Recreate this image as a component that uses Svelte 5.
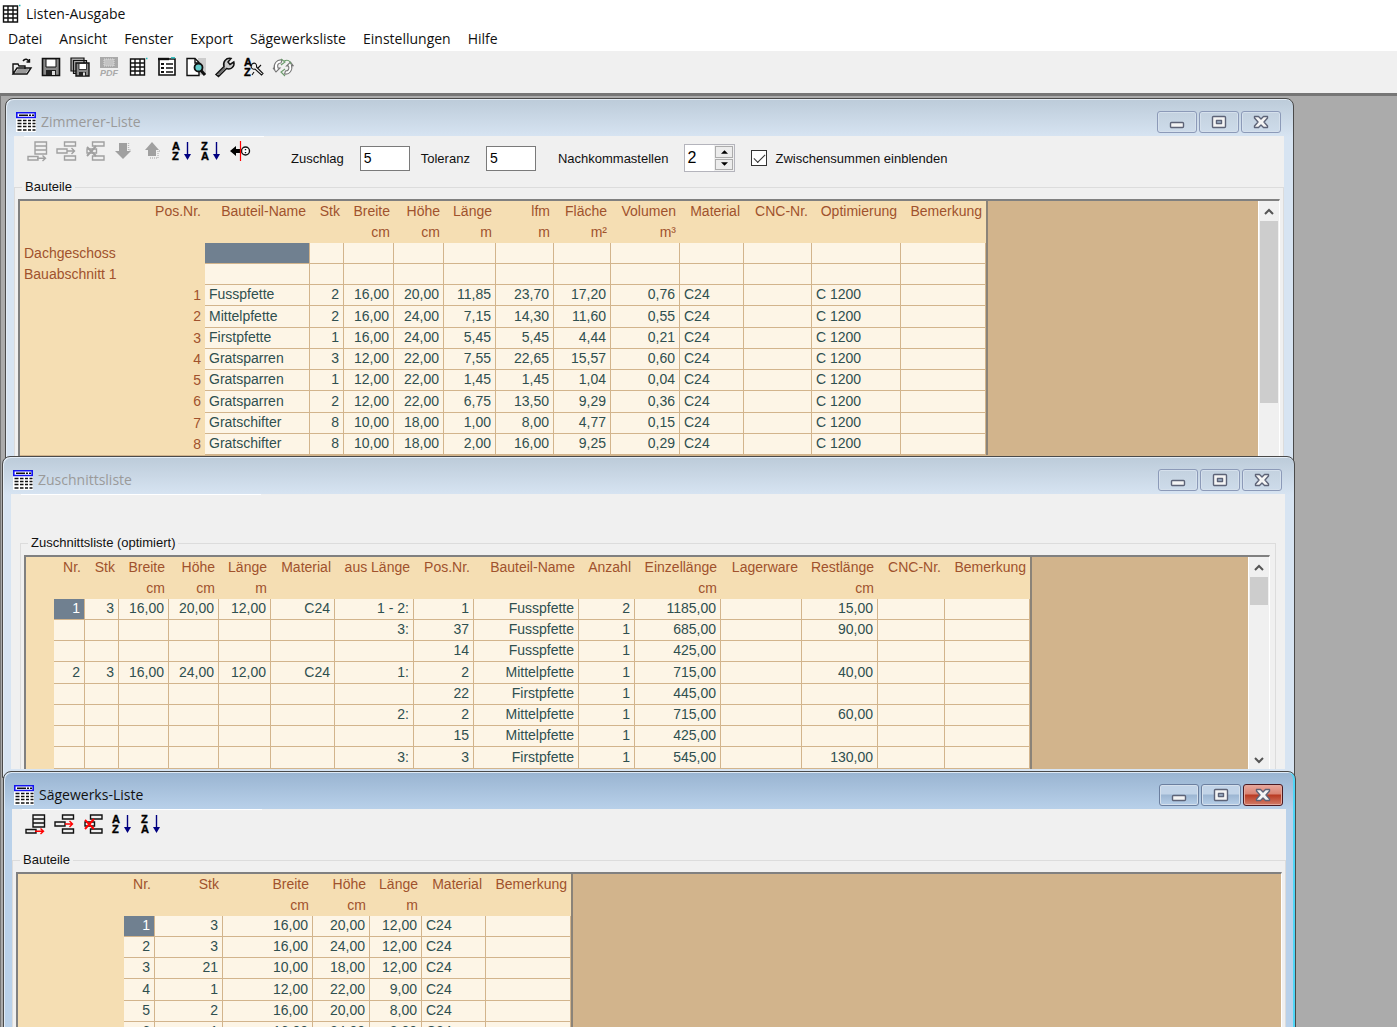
<script lang="ts">
  type Column = { title: string; unit?: string; width: number; left?: boolean };

  const menu = ["Datei", "Ansicht", "Fenster", "Export", "Sägewerksliste", "Einstellungen", "Hilfe"];

  const mainTools = ["open", "save", "saveall", "pdf", "grid", "form", "preview", "wrench", "azwrench", "refresh"];

  let zuschlag = $state("5");
  let toleranz = $state("5");
  let stellen = $state(2);
  let zwischensummen = $state(true);

  const zimmererColumns: Column[] = [
    { title: "Bauteil-Name", width: 105, left: true },
    { title: "Stk", width: 34 },
    { title: "Breite", unit: "cm", width: 50 },
    { title: "Höhe", unit: "cm", width: 50 },
    { title: "Länge", unit: "m", width: 52 },
    { title: "lfm", unit: "m", width: 58 },
    { title: "Fläche", unit: "m²", width: 57 },
    { title: "Volumen", unit: "m³", width: 69 },
    { title: "Material", width: 64, left: true },
    { title: "CNC-Nr.", width: 68 },
    { title: "Optimierung", width: 89, left: true },
    { title: "Bemerkung", width: 85, left: true },
  ];

  const zimmererRows = [
    ["1", "Fusspfette", "2", "16,00", "20,00", "11,85", "23,70", "17,20", "0,76", "C24", "", "C 1200", ""],
    ["2", "Mittelpfette", "2", "16,00", "24,00", "7,15", "14,30", "11,60", "0,55", "C24", "", "C 1200", ""],
    ["3", "Firstpfette", "1", "16,00", "24,00", "5,45", "5,45", "4,44", "0,21", "C24", "", "C 1200", ""],
    ["4", "Gratsparren", "3", "12,00", "22,00", "7,55", "22,65", "15,57", "0,60", "C24", "", "C 1200", ""],
    ["5", "Gratsparren", "1", "12,00", "22,00", "1,45", "1,45", "1,04", "0,04", "C24", "", "C 1200", ""],
    ["6", "Gratsparren", "2", "12,00", "22,00", "6,75", "13,50", "9,29", "0,36", "C24", "", "C 1200", ""],
    ["7", "Gratschifter", "8", "10,00", "18,00", "1,00", "8,00", "4,77", "0,15", "C24", "", "C 1200", ""],
    ["8", "Gratschifter", "8", "10,00", "18,00", "2,00", "16,00", "9,25", "0,29", "C24", "", "C 1200", ""],
  ];

  const zuschnittColumns: Column[] = [
    { title: "Nr.", width: 31 },
    { title: "Stk", width: 34 },
    { title: "Breite", unit: "cm", width: 50 },
    { title: "Höhe", unit: "cm", width: 50 },
    { title: "Länge", unit: "m", width: 52 },
    { title: "Material", width: 64 },
    { title: "aus Länge", width: 79 },
    { title: "Pos.Nr.", width: 60 },
    { title: "Bauteil-Name", width: 105 },
    { title: "Anzahl", width: 56 },
    { title: "Einzellänge", unit: "cm", width: 86 },
    { title: "Lagerware", width: 81 },
    { title: "Restlänge", unit: "cm", width: 76 },
    { title: "CNC-Nr.", width: 67 },
    { title: "Bemerkung", width: 85 },
  ];

  const zuschnittRows = [
    ["1", "3", "16,00", "20,00", "12,00", "C24", "1 - 2:", "1", "Fusspfette", "2", "1185,00", "", "15,00", "", ""],
    ["", "", "", "", "", "", "3:", "37", "Fusspfette", "1", "685,00", "", "90,00", "", ""],
    ["", "", "", "", "", "", "", "14", "Fusspfette", "1", "425,00", "", "", "", ""],
    ["2", "3", "16,00", "24,00", "12,00", "C24", "1:", "2", "Mittelpfette", "1", "715,00", "", "40,00", "", ""],
    ["", "", "", "", "", "", "", "22", "Firstpfette", "1", "445,00", "", "", "", ""],
    ["", "", "", "", "", "", "2:", "2", "Mittelpfette", "1", "715,00", "", "60,00", "", ""],
    ["", "", "", "", "", "", "", "15", "Mittelpfette", "1", "425,00", "", "", "", ""],
    ["", "", "", "", "", "", "3:", "3", "Firstpfette", "1", "545,00", "", "130,00", "", ""],
  ];

  const saegewerkColumns: Column[] = [
    { title: "Nr.", width: 31 },
    { title: "Stk", width: 68 },
    { title: "Breite", unit: "cm", width: 90 },
    { title: "Höhe", unit: "cm", width: 57 },
    { title: "Länge", unit: "m", width: 52 },
    { title: "Material", width: 64, left: true },
    { title: "Bemerkung", width: 85, left: true },
  ];

  const saegewerkRows = [
    ["1", "3", "16,00", "20,00", "12,00", "C24", ""],
    ["2", "3", "16,00", "24,00", "12,00", "C24", ""],
    ["3", "21", "10,00", "18,00", "12,00", "C24", ""],
    ["4", "1", "12,00", "22,00", "9,00", "C24", ""],
    ["5", "2", "16,00", "20,00", "8,00", "C24", ""],
    ["6", "1", "16,00", "24,00", "8,00", "C24", ""],
  ];
</script>

{#snippet icon(name: string)}
  <svg class="icon" viewBox="0 0 20 20" fill="none" stroke="#111" stroke-width="1.4" aria-hidden="true">
    {#if name === "open"}
      <path d="M1 17V7h5l1 2h6v3M1 17l4-6h14l-4 6z" />
      <path d="M3 16l3-4h11l-3 4z" fill="#999" stroke="none" />
      <path d="M11 4c2-3 5-2 6 1M14.500 5h3V2" />
    {:else if name === "save"}
      <path d="M1.500 1.500h17v17h-17z" fill="#888" stroke-width="1.600" />
      <path d="M5 2h10v8H5z" fill="#fff" stroke-width="1" />
      <path d="M5 13h10v5H5z" fill="#222" stroke="none" />
      <path d="M11 14h3v4h-3z" fill="#ddd" stroke="none" />
    {:else if name === "saveall"}
      <path d="M1 1h13v13H1zM3.500 3.500h13v13h-13z" fill="#aaa" stroke-width="1.200" />
      <path d="M6 6h13v13H6z" fill="#888" stroke-width="1.400" />
      <path d="M9 6.500h7.500v6H9z" fill="#fff" stroke-width=".8" />
      <path d="M9 15h7v4H9z" fill="#222" stroke="none" />
      <path d="M13 15.500h2v3h-2z" fill="#ddd" stroke="none" />
    {:else if name === "pdf"}
      <path d="M1 0h18v11H1z" fill="#a9a9a9" stroke="none" />
      <path d="M5 2h10v7H5z" fill="#c4c4c4" stroke="#ddd" stroke-width="1" stroke-dasharray="1 1" />
      <text x="1" y="19" class="pdf">PDF</text>
    {:else if name === "grid"}
      <path d="M2.500 2h14v16h-14z" fill="#fff" />
      <path d="M2.500 6h14M2.500 10h14M2.500 14h14M7 2v16M12 2v16" />
      <path d="M18 1.500h1.500" stroke="#2bb" />
    {:else if name === "form"}
      <path d="M2 2h16v16H2z" fill="#fff" stroke-width="1.600" />
      <path d="M1 2h11" stroke-width="2.400" />
      <path d="M4 6h3v2H4zM4 10h3v2H4zM4 14h3v2H4z" fill="#111" stroke="none" />
      <path d="M9 7h7M9 11h7M9 15h7" />
      <path d="M14 .8h4" stroke="#2bb" />
    {:else if name === "preview"}
      <path d="M12 1h8v17h-8z" fill="#ccc" stroke="none" />
      <path d="M1 1.500h8l4 4v13H1z" fill="#fff" />
      <path d="M9 2v4h4" />
      <circle cx="12.500" cy="10.500" r="4" fill="#6cc" stroke-width="1.800" />
      <path d="M15 13.500l4 4.500" stroke-width="3" />
    {:else if name === "wrench"}
      <path d="M1 17.500l8-8C7.500 5 11 .5 16 1.500L13 5l2 2.500L18.800 5C20 9.500 16 13 11.500 11.500L3.500 19.500z" fill="#ccc" stroke-width="1.500" />
      <path d="M3 17.500l7-7" stroke="#666" />
    {:else if name === "azwrench"}
      <text x="0" y="9" class="az">A</text>
      <text x="0" y="19" class="az">Z</text>
      <path d="M8 7c3-2 5 0 4.500 3l6.500 6.500-1.500 1.500-6.500-6c-3 1-5-2-3-5M17 8l-3 3M10 15l-2 3" stroke-width="1.100" />
    {:else if name === "refresh"}
      <g stroke-width="1.100" stroke="#777">
        <path d="M1.500 12C0 7 4 2 9 3l-1 3c-3 0-4 2-3 5h2l-4 4-3-4z" fill="#fff" />
        <path d="M18.500 8c1.500 5-2 10-7 9l1-3c3 0 4-2 3-5h-2l4-4 3 4z" fill="#fff" />
        <path d="M8 2l4 3-4 3M12 12l-4 3 4 4M11 4c4-2 6 0 7 3" stroke="#6a9a6a" />
      </g>
    {:else if name === "append" || name === "append-off"}
      {@const off = name === "append-off"}
      <path d="M8 1h11.500v12H8zM8 5h11.500M8 9h11.500M1 15.500h10V19H1z" stroke={off ? "#a0a0a0" : "#111"} />
      <path d="M10 17.200h8M15.500 14.500l3 2.700-3 2.800" stroke={off ? "#a0a0a0" : "#f00"} />
    {:else if name === "insert" || name === "insert-off"}
      {@const off = name === "insert-off"}
      <path d="M8.500 1h11v4h-11zM1 8h10v4H1zM8.500 15h11v4h-11z" stroke={off ? "#a0a0a0" : "#111"} />
      <path d="M11 10h7.500M15.500 7l3 3-3 3" stroke={off ? "#a0a0a0" : "#f00"} />
    {:else if name === "delete" || name === "delete-off"}
      {@const off = name === "delete-off"}
      <path d="M7.500 1h11.500v4H7.500zM2 8h9.500v4H2zM7.500 15h11.500v4H7.500z" stroke={off ? "#a0a0a0" : "#111"} />
      <path d="M2 6l9 9M11 5l-9 10" stroke={off ? "#a0a0a0" : "#f00"} stroke-width="1.900" />
    {:else if name === "down"}
      <path d="M5 2h8v8h4l-8 8-8-8h4z" fill="#a0a0a0" stroke="none" />
      <path d="M14.500 2v7h3" stroke="#bbb" stroke-dasharray="1 1" />
    {:else if name === "up"}
      <path d="M5 15h8V9h3L9 1 2 9h3z" fill="#a0a0a0" stroke="none" />
      <path d="M7 17h8v-7h3" stroke="#bbb" stroke-dasharray="1 1" />
    {:else if name === "az" || name === "za"}
      <text x="0" y="9" class="az">{name === "az" ? "A" : "Z"}</text>
      <text x="0" y="19" class="az">{name === "az" ? "Z" : "A"}</text>
      <path d="M15.500 1v13" stroke="#000080" />
      <path d="M12 13h7l-3.500 6z" fill="#000080" stroke="none" />
    {:else if name === "gauge"}
      <path d="M0 10l6-5v3h4v4H6v3z" fill="#000" stroke="none" />
      <circle cx="15.500" cy="10" r="4" fill="#fff" />
      <path d="M15.500 8v1.200M15.500 11v1.200" />
      <path d="M10.500 0v20" stroke="#f00" stroke-width="1.200" />
    {:else if name === "list"}
      <path d="M0 0h20v20H0z" fill="#fff" stroke="none" />
      <path d="M.8.800h18.400v4.700H.8z" fill="#fff" stroke="#1414f0" stroke-width="1.600" />
      <path d="M3 3.200h9M13 3.200h2M16 3.200h2" />
      <path d="M1.500 8.500h4M7 8.500h3.500M12 8.500h3M16.500 8.500h3M1.500 11.500h4M7 11.500h3.500M12 11.500h3M16.500 11.500h3M1.500 14.500h4M7 14.500h3.500M12 14.500h3M16.500 14.500h3M1.500 18h4M7 18h3.500M12 18h3M16.500 18h3" stroke-width="1.700" />
    {/if}
  </svg>
{/snippet}

{#snippet tool(name: string)}
  <button class="tool" type="button" aria-label={name}>{@render icon(name)}</button>
{/snippet}

{#snippet titleBar(title: string)}
  <header class="title-bar">
    {@render icon("list")}
    <h2>{title}</h2>
    <div class="window-buttons">
      <button type="button" aria-label="Minimieren">
        <svg viewBox="0 0 16 14"><rect x="1.500" y="7.500" width="13" height="5" rx="1" /></svg>
      </button>
      <button type="button" aria-label="Maximieren">
        <svg viewBox="0 0 16 14">
          <rect x="1.500" y="1.500" width="13" height="11" rx="1" />
          <rect x="5.500" y="5.500" width="5" height="3" class="hole" />
        </svg>
      </button>
      <button class="close" type="button" aria-label="Schließen">
        <svg viewBox="0 0 16 14">
          <path d="M1.500 1.500h4L8 4l2.500-2.500h4v1.500L11 7l3.500 4v1.500h-4L8 10l-2.500 2.500h-4V11L5 7 1.500 3z" />
        </svg>
      </button>
    </div>
  </header>
{/snippet}

{#snippet tableHead(columns: Column[], corner: string)}
  <thead>
    <tr>
      <th>{corner}</th>
      {#each columns as column}<th>{column.title}</th>{/each}
    </tr>
    <tr>
      <th></th>
      {#each columns as column}<th>{column.unit ?? ""}</th>{/each}
    </tr>
  </thead>
{/snippet}

{#snippet cols(columns: Column[], first: number)}
  <colgroup>
    <col style="width: {first}px" />
    {#each columns as column}<col style="width: {column.width}px" />{/each}
  </colgroup>
{/snippet}

{#snippet scrollbar(thumb: number)}
  <div class="scrollbar">
    <button type="button" aria-label="Nach oben"><svg viewBox="0 0 10 8"><path d="M1 6l4-4 4 4" /></svg></button>
    <div class="track"><div class="thumb" style="height: {thumb}px"></div></div>
    <button type="button" aria-label="Nach unten"><svg viewBox="0 0 10 8"><path d="M1 2l4 4 4-4" /></svg></button>
  </div>
{/snippet}

<div class="app">
  <header class="app-title">
    {@render icon("grid")}
    <h1>Listen-Ausgabe</h1>
  </header>
  <nav class="menu">
    {#each menu as item}<button type="button">{item}</button>{/each}
  </nav>
  <div class="main-tools">
    {#each mainTools as name}{@render tool(name)}{/each}
  </div>

  <main class="desktop">
    <section class="window zimmerer">
      {@render titleBar("Zimmerer-Liste")}
      <div class="client">
        <div class="bar">
          <div class="tools">
            {#each ["append-off", "insert-off", "delete-off", "down", "up", "az", "za", "gauge"] as name}{@render tool(name)}{/each}
          </div>
          <div class="options">
            <label for="zuschlag">Zuschlag</label>
            <input id="zuschlag" type="text" bind:value={zuschlag} />
            <label for="toleranz">Toleranz</label>
            <input id="toleranz" type="text" bind:value={toleranz} />
            <label for="stellen">Nachkommastellen</label>
            <div class="spinner">
              <input id="stellen" type="text" bind:value={stellen} />
              <div class="steps">
                <button type="button" aria-label="Mehr" onclick={() => stellen++}><svg viewBox="0 0 8 4"><path d="M4 0l4 4H0z" /></svg></button>
                <button type="button" aria-label="Weniger" onclick={() => stellen--}><svg viewBox="0 0 8 4"><path d="M0 0h8L4 4z" /></svg></button>
              </div>
            </div>
            <label class="check">
              <input type="checkbox" bind:checked={zwischensummen} />
              Zwischensummen einblenden
            </label>
          </div>
        </div>
        <fieldset>
          <legend>Bauteile</legend>
          <div class="panel">
            <table style="width: 968px">
              {@render cols(zimmererColumns, 185)}
              {@render tableHead(zimmererColumns, "Pos.Nr.")}
              <tbody>
                {#each ["Dachgeschoss", "Bauabschnitt 1"] as group, i}
                  <tr>
                    <th class="group">{group}</th>
                    {#each zimmererColumns as _, c}<td class:selected={i === 0 && c === 0}></td>{/each}
                  </tr>
                {/each}
                {#each zimmererRows as row}
                  <tr>
                    <th>{row[0]}</th>
                    {#each zimmererColumns as column, c}<td class:left={column.left}>{row[c + 1]}</td>{/each}
                  </tr>
                {/each}
              </tbody>
            </table>
            {@render scrollbar(182)}
          </div>
        </fieldset>
      </div>
    </section>

    <section class="window zuschnitt">
      {@render titleBar("Zuschnittsliste")}
      <div class="client">
        <div class="bar"></div>
        <fieldset>
          <legend>Zuschnittsliste (optimiert)</legend>
          <div class="panel">
            <table style="width: 1006px">
              {@render cols(zuschnittColumns, 28)}
              {@render tableHead(zuschnittColumns, "")}
              <tbody>
                {#each zuschnittRows as row, r}
                  <tr>
                    <th></th>
                    {#each row as cell, c}<td class:selected={r === 0 && c === 0}>{cell}</td>{/each}
                  </tr>
                {/each}
              </tbody>
            </table>
            {@render scrollbar(28)}
          </div>
        </fieldset>
      </div>
    </section>

    <section class="window saegewerk active">
      {@render titleBar("Sägewerks-Liste")}
      <div class="client">
        <div class="bar">
          <div class="tools">
            {#each ["append", "insert", "delete", "az", "za"] as name}{@render tool(name)}{/each}
          </div>
        </div>
        <fieldset>
          <legend>Bauteile</legend>
          <div class="panel">
            <table style="width: 555px">
              {@render cols(saegewerkColumns, 106)}
              {@render tableHead(saegewerkColumns, "")}
              <tbody>
                {#each saegewerkRows as row, r}
                  <tr>
                    <th></th>
                    {#each saegewerkColumns as column, c}
                      <td class:left={column.left} class:selected={r === 0 && c === 0}>{row[c]}</td>
                    {/each}
                  </tr>
                {/each}
              </tbody>
            </table>
          </div>
        </fieldset>
      </div>
    </section>
  </main>
</div>

<style>
  :global(body) {
    margin: 0;
  }
  .app {
    display: flex;
    flex-direction: column;
    height: 100vh;
    overflow: hidden;
    background: #fff;
    color: #111;
    font-family: "Liberation Sans", Arial, sans-serif;
    font-size: 13px;
  }
  .app * {
    box-sizing: border-box;
  }
  button {
    padding: 0;
    border: 0;
    background: none;
    font: inherit;
    color: inherit;
  }
  .icon {
    display: block;
    width: 20px;
    height: 20px;
    flex: none;
    overflow: visible;
  }
  .az {
    font: bold 11px "Liberation Sans", Arial, sans-serif;
    fill: #000;
    stroke: #000;
    stroke-width: 0.4;
  }
  .pdf {
    font: italic bold 9px "Liberation Sans", Arial, sans-serif;
    fill: #a9a9a9;
    stroke: none;
  }

  .app-title {
    display: flex;
    align-items: center;
    gap: 5px;
    height: 27px;
    padding-left: 1px;
  }
  h1,
  h2 {
    margin: 0;
    font-family: "Open Sans", "Segoe UI", sans-serif;
    font-size: 14px;
    font-weight: 400;
  }
  .menu {
    display: flex;
    gap: 17px;
    height: 24px;
    padding: 0 8px;
    font-family: "Open Sans", "Segoe UI", sans-serif;
    font-size: 14px;
    line-height: 24px;
  }
  .main-tools {
    display: flex;
    gap: 9px;
    height: 42px;
    padding: 6px 12px;
    background: #f0f0f0;
  }
  .tool {
    display: block;
    height: 20px;
  }

  .desktop {
    position: relative;
    flex: 1;
    min-height: 0;
    overflow: hidden;
    border-top: 3px solid #767676;
    border-left: 1px solid #767676;
    background: #ababab;
  }
  .window {
    position: absolute;
    display: flex;
    flex-direction: column;
    padding: 0 9px 8px 8px;
    border: 1px solid #4a4a4a;
    border-radius: 8px 8px 0 0;
    background: linear-gradient(#bccbd9, #d7e4f2 38px);
    box-shadow: inset 1px 1px 0 #e4edf6;
  }
  .zimmerer {
    top: 2px;
    left: 4px;
    right: 103px;
    height: 420px;
  }
  .zuschnitt {
    top: 360px;
    left: 1px;
    right: 102px;
  }
  .saegewerk {
    top: 675px;
    left: 2px;
    right: 101px;
    height: 300px;
  }
  .active {
    background: linear-gradient(#99b4d1, #b9d1ea 38px);
    box-shadow: inset 1px 1px 0 #dfeaf5, inset -2px 0 0 #4fd5f5;
  }
  .title-bar {
    display: flex;
    align-items: center;
    gap: 5px;
    height: 37px;
    padding: 8px 3px 0 2px;
    flex: none;
  }
  .title-bar h2 {
    flex: 1;
    color: #9a9a9a;
  }
  .active h2 {
    color: #111;
  }
  .window-buttons {
    display: flex;
    gap: 2px;
  }
  .window-buttons button {
    display: flex;
    align-items: center;
    justify-content: center;
    width: 40px;
    height: 22px;
    border: 1px solid #8c9ab8;
    border-radius: 3px;
    background: linear-gradient(#c3d1df, #cddbea);
    box-shadow: inset 0 0 0 1px #d5e0ec;
  }
  .window-buttons svg {
    width: 16px;
    height: 14px;
    fill: #f4f4f4;
    stroke: #5d6377;
    stroke-width: 1.4;
    stroke-linejoin: round;
  }
  .window-buttons .hole {
    fill: #a9bdd2;
  }
  .active .window-buttons button {
    border-color: #6b7f9f;
    background: linear-gradient(#c2d4e8 45%, #9cb6d2 50%, #b7cfe8);
  }
  .active .window-buttons .close {
    border-color: #4b1a22;
    background: linear-gradient(#e8a79c, #d98373 45%, #b93a22 50%, #d27c68);
    box-shadow: inset 0 0 0 1px #e3a79b;
  }

  .client {
    display: flex;
    flex-direction: column;
    flex: 1;
    background: #f0f0f0;
  }
  .client::before {
    content: "";
    width: 240px;
    height: 1px;
    margin-left: 10px;
    background: #fff;
  }
  .bar {
    display: flex;
    height: 42px;
    padding-left: 13px;
    flex: none;
  }
  .zuschnitt .bar {
    height: 40px;
  }
  .tools {
    display: flex;
    gap: 9px;
    padding-top: 4px;
  }
  .options {
    display: flex;
    align-items: center;
    margin-left: 41px;
  }
  .options label {
    margin-right: 16px;
  }
  .options > input {
    width: 50px;
    height: 25px;
    margin-right: 11px;
    padding: 0 3px;
    border: 1px solid #7a7a7a;
    background: #fff;
    font: inherit;
    font-size: 14px;
  }
  .options > input:nth-of-type(2) {
    margin-right: 22px;
  }
  .spinner {
    display: flex;
    width: 51px;
    height: 28px;
    border: 1px solid #b4b4bc;
    background: #fff;
  }
  .spinner input {
    width: 29px;
    padding: 0 2px;
    border: 0;
    font: inherit;
    font-size: 16px;
  }
  .steps {
    display: flex;
    flex: 1;
    flex-direction: column;
    gap: 1px;
    padding: 1px;
    background: #f0f0f0;
  }
  .steps button {
    display: flex;
    flex: 1;
    align-items: center;
    justify-content: center;
    border: 1px solid #acacac;
    background: #ececec;
  }
  .steps svg {
    width: 7px;
    height: 4px;
  }
  .options .check {
    display: flex;
    align-items: center;
    gap: 8px;
    margin: 0 0 0 16px;
  }
  .check input {
    display: grid;
    place-items: center;
    width: 16px;
    height: 16px;
    margin: 0;
    appearance: none;
    border: 1px solid #333;
    background: #fff;
  }
  .check input:checked::before {
    content: "";
    width: 10px;
    height: 5px;
    margin-bottom: 3px;
    border: solid #333;
    border-width: 0 0 1px 1px;
    transform: rotate(-45deg);
  }

  fieldset {
    display: flex;
    flex: 1;
    flex-direction: column;
    min-width: 0;
    margin: 0;
    padding: 4px 3px 0;
    border: 1px solid #dcdcdc;
    border-bottom: 0;
  }
  .zuschnitt fieldset {
    margin: 0 9px;
    padding-right: 5px;
  }
  legend {
    margin-left: 4px;
    padding: 0 3px;
    line-height: 16px;
  }
  .panel {
    display: flex;
    flex: 1;
    align-items: stretch;
    border: 2px solid #808080;
    border-right: 1px solid #fff;
    border-bottom: 0;
    background: #d2b48c;
  }
  table {
    align-self: flex-start;
    table-layout: fixed;
    border-spacing: 0;
    border-right: 2px solid #8b8378;
    background: #f5deb3;
    font-size: 14px;
    flex: none;
  }
  tr {
    height: 21px;
  }
  tbody tr:nth-child(4n) {
    height: 22px;
  }
  th,
  td {
    padding: 0 4px 2px;
    line-height: 18px;
    text-align: right;
    white-space: nowrap;
  }
  th {
    color: #a0522d;
    font-weight: 400;
  }
  .group {
    text-align: left;
  }
  td {
    border-right: 1px solid #d2b48c;
    border-bottom: 1px solid #d2b48c;
    background: #fdf5e6;
    color: #2f4f4f;
  }
  td.left {
    text-align: left;
  }
  td.selected {
    background: #708090;
    color: #fff;
  }

  .scrollbar {
    display: flex;
    flex-direction: column;
    width: 21px;
    margin-left: auto;
    padding: 0 1px;
    border-left: 1px solid #fff;
    background: #f0f0f0;
  }
  .scrollbar button {
    height: 20px;
    flex: none;
  }
  .scrollbar button svg {
    width: 10px;
    height: 8px;
    fill: none;
    stroke: #555;
    stroke-width: 2;
  }
  .track {
    flex: 1;
  }
  .thumb {
    background: #cdcdcd;
  }
</style>
